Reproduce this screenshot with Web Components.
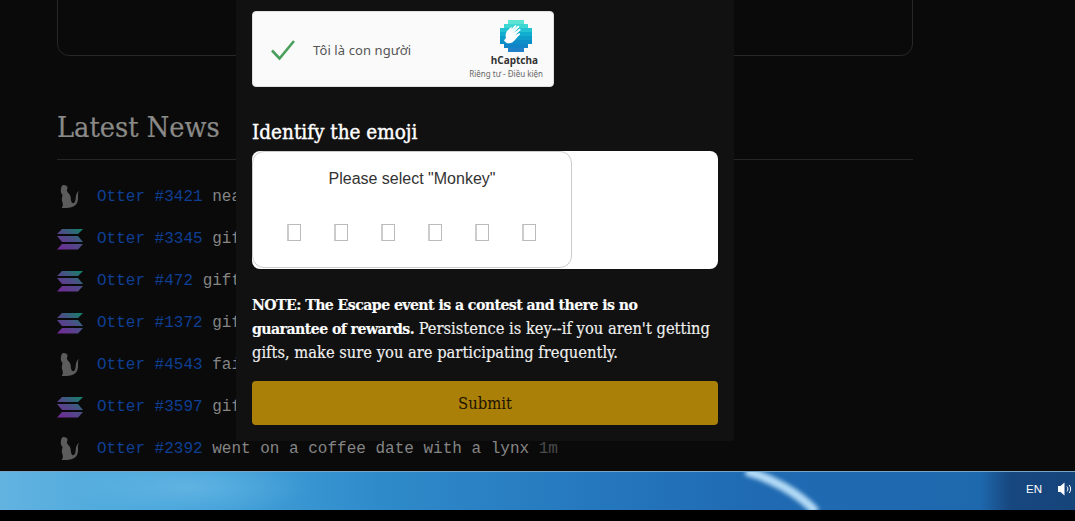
<!DOCTYPE html>
<html lang="en"><head><meta charset="utf-8"><title>Escape</title>
<style>
html,body{margin:0;height:521px;overflow:hidden;background:#000}
</style></head><body>
<app-page>
  <news-row kind="otter" num="#3421" text="nearly"></news-row>
  <news-row kind="sol" num="#3345" text="gift"></news-row>
  <news-row kind="sol" num="#472" text="gift"></news-row>
  <news-row kind="sol" num="#1372" text="gift"></news-row>
  <news-row kind="otter" num="#4543" text="fail"></news-row>
  <news-row kind="sol" num="#3597" text="gift"></news-row>
  <news-row kind="otter" num="#2392" text="went on a coffee date with a lynx" time="1m"></news-row>
  <escape-modal slot="modal"></escape-modal>
</app-page>
<task-bar></task-bar>
<script>
const def=(n,html,init)=>customElements.define(n,class extends HTMLElement{
  constructor(){super();this.attachShadow({mode:'open'}).innerHTML=html;}
  connectedCallback(){init&&init.call(this,this.shadowRoot);}
});
const SLAB='"DejaVu Serif",serif';
def('app-page',`<style>
:host{display:block;position:relative;height:471px;overflow:hidden;background:#0a0a0a}
.wrap{display:flex;flex-direction:column;margin:0 162px 0 57px}
.card{height:74px;margin-top:-20px;border:1px solid #272727;border-radius:12px}
h2{margin:51px 0 0;font:400 28.600px/40px ${SLAB};font-stretch:condensed;color:#8a8a88;padding-bottom:12px;border-bottom:1px solid #262626;-webkit-text-stroke:.2px #8a8a88}
.list{display:flex;flex-direction:column;gap:10px;margin-top:21px}
</style><div class="wrap"><div class="card"></div><h2>Latest News</h2><div class="list"><slot></slot></div></div><slot name="modal"></slot>`);
const OTTER=`<svg width="26" height="26" viewBox="0 0 26 26"><path fill="#5c5c5c" d="M6.500 1C8.800 1 10.500 2 10.500 3.500c0 1.500-.8 2.500-.5 3.500.5 1.800 3 3 3.500 5.500.4 2 .2 4 1.300 6 .8 1.300 2.200 1 3-.5 1.200-2.200.7-4.500 1.200-6.500.4-1.800 1.500-3.500 2.800-5-.6 2-1 3.700-.8 6 .3 3-.3 6.500-2.700 8.800-2 1.800-4.300 2.200-6.500 2.400-2.200.2-4.500.5-6.500.3-.7-.1-.6-1 0-1.300.5-.4.6-1.200.5-2.700-.2-1.500-1-3-1-4.700 0-2 .9-3.300.6-4.300-.3-1-1.200-1.500-1.500-3C3.600 3.500 4.800 1 6.500 1z"/></svg>`;
let gid=0;
const SOL=()=>{const i='g'+(++gid);return `<svg width="26" height="21" viewBox="0 0 26 21"><defs><linearGradient id="${i}" gradientUnits="userSpaceOnUse" x1="22" y1="-1" x2="6" y2="22"><stop offset="0" stop-color="#15806a"/><stop offset=".45" stop-color="#4a4f86"/><stop offset="1" stop-color="#702a96"/></linearGradient></defs><path fill="url(#${i})" d="M5 0H26L21 5H0zM0 7H21L26 13H5zM5 15H26L21 20.500H0z"/></svg>`};
def('news-row',`<style>
:host{display:flex;align-items:center;height:32px;font:16px/32px "Liberation Mono",monospace;color:#858585;white-space:pre}
.i{flex:none;width:40px;display:flex}
a{color:#0e3f93}
.t{color:#4a4a4a}
</style><span class="i"></span><span><a></a> <span class="x"></span><span class="t"></span></span>`,function(s){
  const k=this.getAttribute('kind');
  s.querySelector('.i').innerHTML=k==='otter'?OTTER:SOL();
  s.querySelector('a').textContent='Otter '+this.getAttribute('num');
  s.querySelector('.x').textContent=this.getAttribute('text');
  const t=this.getAttribute('time'); if(t)s.querySelector('.t').textContent=' '+t;
});
def('h-captcha',`<style>
:host{display:flex;align-items:center;box-sizing:border-box;width:302px;height:76px;background:#fafafa;border:1px solid #e0e0e0;border-radius:4px;font-family:"Noto Sans",sans-serif;color:#555}
.c{flex:none;margin:2px 0 0 17px;width:26px;height:22px;display:flex}
.l{margin:2px 0 0 17px;font-size:13px;flex:1;letter-spacing:.1px}
.b{flex:none;align-self:flex-start;margin:8px 10px 0 0;display:flex;flex-direction:column;align-items:flex-end}
.logo{margin-right:11px}
.n{font:700 10px/12px "Noto Sans",sans-serif;color:#333;margin:2px 5px 0 0}
.s{font:8px/11px "Noto Sans",sans-serif;color:#666;margin-top:2px;white-space:nowrap}
svg{display:block}
</style><span class="c"><svg width="26" height="22" viewBox="0 0 26 22"><path d="M2 11.500L9.500 19.500L24 2" fill="none" stroke="#4a9f5c" stroke-width="2.600"/></svg></span>
<span class="l">Tôi là con người</span>
<span class="b"><span class="logo"></span><span class="n">hCaptcha</span><span class="s">Riêng tư - Điều kiện</span></span>`,function(s){
  const rows=[[2,4,'#5be4d4'],[1,6,'#3ed6d2'],[0,8,'#22c2d4'],[0,8,'#12aed0'],[0,8,'#0e9cca'],[0,8,'#0e8ec8'],[1,6,'#1084c6'],[2,4,'#2080c8']];
  let r='';rows.forEach(([x,w,c],y)=>{r+=`<rect x="${x*4}" y="${y*4}" width="${w*4}" height="4" fill="${c}"/>`});
  s.querySelector('.logo').innerHTML=`<svg width="32" height="32" viewBox="0 0 32 32">${r}
  <path fill="#fff" d="M6 18c-.9-2.300 0-5.200 1-7l3.600-3.400c.9-.7 1.700.3 1.100 1.100l-2.400 2.800 5.600-6c.9-.9 2.200.2 1.300 1.200l-4.400 5 5.900-5.600c1-.9 2.200.2 1.300 1.200l-5.500 5.800 5.600-4.100c1.100-.7 2 .6 1.100 1.400l-5.200 4.900 3.900-2c1.100-.4 1.700.8.900 1.500-2.600 2.200-4.400 5.300-7.200 7.400-3.100 2.200-7.300 1.100-8.600-2z"/></svg>`;
});
def('emoji-captcha',`<style>
:host{display:block;background:#fff;border-radius:8px;height:118px}
.in{box-sizing:border-box;width:320px;height:117px;border:1px solid #ccc;border-radius:12px;display:flex;flex-direction:column;align-items:center}
p{margin:17px 0 0;font:16px/20px "Liberation Sans",sans-serif;color:#333}
.r{display:flex;gap:33px;margin:35px 0 0 -1px}
i{box-sizing:border-box;display:block;width:14px;height:17px;border:1px solid #bbb;border-left:2px solid #ccc}
</style><div class="in"><p>Please select "Monkey"</p><div class="r"><i></i><i></i><i></i><i></i><i></i><i></i></div></div>`);
def('escape-modal',`<style>
:host{position:absolute;left:236px;top:0;width:498px;height:441px;box-sizing:border-box;padding:11px 16px 0;background:#111;color:#fff;display:flex;flex-direction:column;font-family:${SLAB};font-stretch:condensed}
h3{margin:31px 0 0;font:500 20.500px/28px ${SLAB};font-stretch:condensed;color:#fff;height:33px;-webkit-text-stroke:.4px #fff}
.note{margin:24px 0 0;font:400 16.350px/24px ${SLAB};font-stretch:condensed;color:#f0f0f0;-webkit-text-stroke:.15px #f0f0f0}
b{font-weight:700;color:#fff;font-size:15.700px;letter-spacing:-.56px}
button{all:unset;margin-top:16px;height:44px;border-radius:4px;background:#ab8008;color:#1c1400;text-align:center;font:400 16.500px/46px ${SLAB};font-stretch:condensed}
</style><h-captcha></h-captcha><h3>Identify the emoji</h3><emoji-captcha></emoji-captcha>
<p class="note"><b>NOTE: The Escape event is a contest and there is no</b><br><b>guarantee of rewards.</b> <span>Persistence is key--if you aren't getting</span><br><span>gifts, make sure you are participating frequently.</span></p>
<button>Submit</button>`);
def('task-bar',`<style>
:host{display:block;height:50px;background:#000}
.b{position:relative;height:39px;box-sizing:border-box;border-top:1px solid #7ba4c4;overflow:hidden;display:flex;justify-content:flex-end;align-items:center;gap:15px;padding:0 2px 5px 0;color:#fff;
background:radial-gradient(ellipse 120px 30px at 190px 15px,rgba(120,195,235,.5),transparent),linear-gradient(90deg,#62b3e0 0,#4ea9dc 120px,#3f9dd6 250px,#2f8bca 375px,#2577bd 600px,#1f6ab2 760px,#1e68ae 980px,#17477f 1010px,#16457c 1075px)}
.s{position:absolute;left:740px;top:0;width:90px;height:38px}
.en{font:11.500px/14px "Liberation Sans",sans-serif}
svg{display:block}
</style><div class="b"><svg class="s" viewBox="0 0 90 38"><defs><filter id="bl"><feGaussianBlur stdDeviation="2"/></filter></defs><path d="M6 -1C30 6 58 20 76 40" fill="none" stroke="#b2daf6" stroke-width="9" filter="url(#bl)"/></svg>
<span class="en">EN</span><svg width="16" height="16" viewBox="0 0 16 16"><path fill="#fff" d="M1 5h2.500l4-3.500v13l-4-3.500H1z"/><path d="M10 5.500c1.200 1.500 1.200 3.500 0 5M12.200 4c1.900 2.400 1.900 5.600 0 8" fill="none" stroke="#fff" stroke-width="1"/></svg></div>`);
</script>
</body></html>
